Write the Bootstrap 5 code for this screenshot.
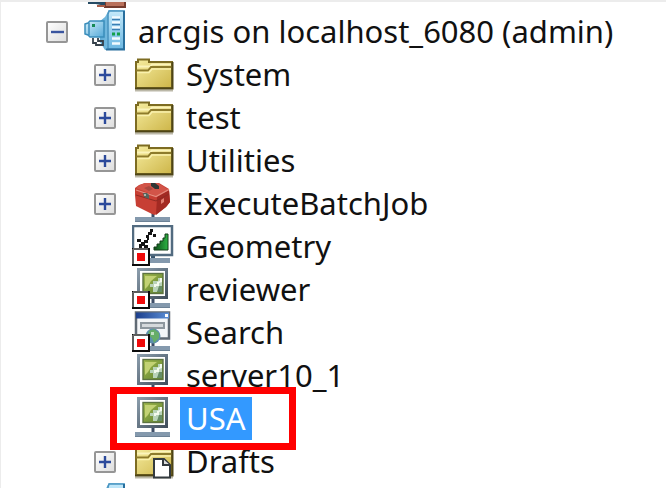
<!DOCTYPE html>
<html lang="en">
<head>
<meta charset="utf-8">
<meta name="viewport" content="width=device-width, initial-scale=1">
<title>arcgis on localhost_6080 (admin)</title>
<link href="https://cdn.jsdelivr.net/npm/bootstrap@5.3.0/dist/css/bootstrap.min.css" rel="stylesheet">
<style>
  body { font-family: "Noto Sans", "Open Sans", sans-serif; font-size: 31px; color: #111; background: #fff; }
  .catalog { border-top: 2px solid #ececec; border-left: 1px solid #ececec; }
  .tree-root { margin-top: -35px; padding-left: 45px; }
  .tree-branch { padding-left: 48px; }
  .tree-row { height: 43px; line-height: 43px; }
  .toggle-slot { width: 22px; height: 22px; margin-right: 16px; }
  .toggle-slot svg { width: 22px; height: 22px; }
  .tree-icon { width: 42px; height: 43px; margin-right: 6px; }
  .tree-label { padding: 0 6px; }
  .tree-label.selected { background: #3399ff; color: #fff; }
  .callout-frame { left: 16px; top: -10px; width: 186px; height: 63px; border: 7px solid #f00; z-index: 2; pointer-events: none; }
</style>
<script src="https://cdn.jsdelivr.net/npm/bootstrap@5.3.0/dist/js/bootstrap.bundle.min.js"></script>
</head>
<body>
<svg class="position-absolute" width="0" height="0" aria-hidden="true">
  <defs>
    <linearGradient id="gFolder" x1="0" y1="0" x2="1" y2="1"><stop offset="0" stop-color="#f6eda0"/><stop offset="1" stop-color="#cdb548"/></linearGradient>
    <linearGradient id="gBox" x1="0" y1="0" x2="1" y2="1"><stop offset="0" stop-color="#fff"/><stop offset="1" stop-color="#dcdcdc"/></linearGradient>
    <linearGradient id="gServer" x1="0" y1="0" x2="1" y2="0"><stop offset="0" stop-color="#5aa9d4"/><stop offset="1" stop-color="#a9dcf5"/></linearGradient>
    <linearGradient id="gPanel" x1="0" y1="0" x2="0" y2="1"><stop offset="0" stop-color="#c4e9fa"/><stop offset="1" stop-color="#6db8e2"/></linearGradient>
    <linearGradient id="gCube" x1="0" y1="0" x2="1" y2="1"><stop offset="0" stop-color="#d5f0fb"/><stop offset="1" stop-color="#54a9d8"/></linearGradient>
    <linearGradient id="gFrame" x1="0" y1="0" x2="1" y2="1"><stop offset="0" stop-color="#8a9cab"/><stop offset="1" stop-color="#42505e"/></linearGradient>
    <linearGradient id="gMap" x1="0" y1="0" x2="1" y2="1"><stop offset="0" stop-color="#a2b94a"/><stop offset="1" stop-color="#5f8332"/></linearGradient>
    <linearGradient id="gBar" x1="0" y1="0" x2="1" y2="0"><stop offset="0" stop-color="#1c3f8d"/><stop offset="1" stop-color="#5c8fd6"/></linearGradient>
    <linearGradient id="gGreen" x1="0" y1="0" x2="1" y2="0"><stop offset="0" stop-color="#0c4a16"/><stop offset="1" stop-color="#2eb344"/></linearGradient>

    <symbol id="minus" viewBox="0 0 22 22"><rect x="1" y="1" width="20" height="20" rx="1" fill="url(#gBox)" stroke="#969696" stroke-width="2"/><path d="M5 11h13" stroke="#3a559f" stroke-width="2.4"/></symbol>
    <symbol id="plus" viewBox="0 0 22 22"><rect x="1" y="1" width="20" height="20" rx="1" fill="url(#gBox)" stroke="#969696" stroke-width="2"/><path d="M5 11h12M11 5v12" stroke="#2c4a9b" stroke-width="2.4"/></symbol>

    <symbol id="base" viewBox="0 0 42 43"><path d="M21 30v6" stroke="#3c4c66" stroke-width="3"/><rect x="3" y="35" width="35" height="5" fill="#8499ad"/><path d="M3 39.500h35" stroke="#6c8195"/></symbol>
    <symbol id="stopped" viewBox="0 0 42 43"><rect x="1" y="24" width="16" height="16" fill="#fff" stroke="#0c0c0c" stroke-width="2"/><path d="M1 24h15M1 24v15" stroke="#777" stroke-width="1.500"/><rect x="5" y="28" width="8" height="8" fill="#f00a0a"/></symbol>

    <symbol id="folder" viewBox="0 0 42 43">
      <path d="M3 37.500h38" stroke="#bbb8a8" stroke-width="2"/>
      <path d="M4 35V9h2V6.500h11V9h23v26z" fill="url(#gFolder)" stroke="#7d6c22" stroke-width="2"/>
      <path d="M5 13.500h13l2-2h19" fill="none" stroke="#fbf4bb" stroke-width="2"/>
      <path d="M4 17.500h12l3-3.500h21" fill="none" stroke="#8d7b2b" stroke-width="1.800"/>
      <path d="M5 19.500h12l3-3.500h19" fill="none" stroke="#faf1ad" stroke-width="1.500"/>
      <path d="M3 35.500h37.500V9" fill="none" stroke="#4e4516" stroke-width="2"/>
    </symbol>
    <symbol id="drafts" viewBox="0 0 42 43">
      <use href="#folder"/>
      <path d="M22 19h10l6 6v12.500H22z" fill="#fff" stroke="#333a3f" stroke-width="2"/>
      <path d="M31 19v6h7" fill="#ddd" stroke="#333a3f" stroke-width="2"/>
    </symbol>
    <symbol id="server" viewBox="0 0 42 43">
      <path d="M15 12l6-5 4-7h16v40H21l-5-8z" fill="url(#gServer)"/>
      <path d="M25 1h15v38H24V4z" fill="url(#gPanel)" stroke="#4a94c0" stroke-width="1.600"/>
      <path d="M40 1v38.500H22" fill="none" stroke="#286f9e" stroke-width="2"/>
      <path d="M28 7.500h8M28 12.500h8M28 17.500h8M28 28.500h8M28 33.500h8" stroke="#f2fbff" stroke-width="2.500"/>
      <path d="M28 9.500h8M28 14.500h8M28 19.500h8" stroke="#397eb3" stroke-width="1.600"/>
      <path d="M28 24h3M33 24h3" stroke="#14a04b" stroke-width="3"/>
      <path d="M1 14l3-1 2-2h14v16H6l-2-2-3-1z" fill="url(#gCube)" stroke="#3a8dbb" stroke-width="1.500"/>
      <path d="M5 13v12" stroke="#3a8dbb" stroke-width="1.500"/><path d="M8 15.500h3" stroke="#168a55" stroke-width="3"/>
      <path d="M9 28v5h3v2h7v-4h-5v-3" fill="none" stroke="#35404a" stroke-width="1.800"/>
    </symbol>
    <symbol id="toolserver" viewBox="0 0 42 43">
      <path d="M21 33h20v7H21z" fill="#b9705a"/><path d="M21 34v6h20v-7" fill="none" stroke="#753b2d" stroke-width="2"/><path d="M4 35.500h8l5 1h4" fill="none" stroke="#264b64" stroke-width="3"/><path d="M13 39h8" stroke="#a85b45" stroke-width="2"/>
    </symbol>
    <symbol id="toolbox" viewBox="0 0 42 43">
      <use href="#base"/>
      <path d="M3 6l4-3 6-2h14l10 6 1 13-4 5-11 8-3-1-16-8-1-11z" fill="#c73f34"/>
      <path d="M4 6l4-3 5-2h13l11 7-13 6z" fill="#d25448"/>
      <path d="M25 15l12-7 1 12-4 5-10 8z" fill="#a32a23"/>
      <path d="M4 8l20 6.500 13-7" fill="none" stroke="#e58c7f" stroke-width="1.300"/>
      <path d="M4 13l20 6 13-7" fill="none" stroke="#8f2a23" stroke-width="1"/>
      <path d="M12 6l5-2 4 3-4 2z" fill="#a9483f"/>
      <path d="M19 1h4l4 3v3h-4l-4-3z" fill="#2f3735"/>
      <path d="M11 11h4l2 2v4l-5-2z" fill="#56645d"/><path d="M12 12h2v2h-2z" fill="#a8b5aa"/>
      <path d="M29 18l3-2v4l-3 2z" fill="#e07f72"/>
    </symbol>
    <symbol id="geometry" viewBox="0 0 42 43">
      <path d="M21 30v5" stroke="#36536b" stroke-width="4"/><rect x="16" y="33" width="22" height="5" fill="#8499ad"/>
      <rect x="1" y="1" width="39" height="29" fill="#fff" stroke="#526b80" stroke-width="2.500"/>
      <path d="M36 9v16H22v-3h3v-3h3v-3h3v-3h2V9z" fill="url(#gGreen)" stroke="#123c18" stroke-width="1"/>
      <path d="M18 4h3v3h-1v3h-4V7h2zM14 10h3v3h-3zM21 9h3v3h-3zM5 14h4v3H5zM9 17h3v-2h4v3h-3v2h3v3h-4v-2h-2v2H7v-4h2zM15 13h2v2h-2z" fill="#141414"/>
      <use href="#stopped"/>
    </symbol>
    <symbol id="mapserver" viewBox="0 0 42 43">
      <use href="#base"/>
      <rect x="6.500" y="1.500" width="28" height="28" fill="#fff" stroke="url(#gFrame)" stroke-width="3"/>
      <rect x="11" y="5.500" width="20" height="20" fill="url(#gMap)" stroke="#5d7340" stroke-width="1.400"/>
      <path d="M13 8h12l-6 5-3 5-3 3z" fill="#c3d274"/>
      <path d="M30 10h-4v3h-5v3h-3v3h3v5h4l5-6z" fill="#b9d3b9"/>
      <path d="M28 10v3l-3 1v2h-3v3h2v-1h3v-3l3-1v-4z" fill="#f3faee"/>
      <path d="M27 18h3v6h-5z" fill="#658c66"/>
    </symbol>
    <symbol id="reviewer" viewBox="0 0 42 43"><use href="#mapserver"/><use href="#stopped"/></symbol>
    <symbol id="search" viewBox="0 0 42 43">
      <use href="#base"/>
      <rect x="4" y="1.500" width="33" height="26" fill="#f4f6f8" stroke="#606a74" stroke-width="2.500"/>
      <rect x="4" y="1.500" width="33" height="6" fill="url(#gBar)"/><rect x="33" y="3" width="3" height="3" fill="#fff"/>
      <rect x="9" y="12" width="23" height="5" fill="#d5d9dc" stroke="#8e979e" stroke-width="2"/>
      <circle cx="21" cy="25" r="7.500" fill="#5d8fae"/><path d="M17 20l5-2 5 4v5l-5 5-2-5-4-3z" fill="#66ad68"/><path d="M19 21h3v3h-3z" fill="#c0dfc1"/>
      <use href="#stopped"/>
    </symbol>
  </defs>
</svg>

<main class="catalog vh-100 overflow-hidden">
  <ul class="tree-root list-unstyled mb-0 text-nowrap" aria-label="Servers">
    <li class="tree-row d-flex align-items-center"><span class="toggle-slot flex-shrink-0"></span><svg class="tree-icon flex-shrink-0" aria-hidden="true"><use href="#toolserver"/></svg></li>
    <li>
      <div class="tree-row d-flex align-items-center"><button type="button" class="toggle-slot btn p-0 border-0 d-flex flex-shrink-0" aria-label="Collapse arcgis" aria-expanded="true"><svg><use href="#minus"/></svg></button><svg class="tree-icon flex-shrink-0" aria-hidden="true"><use href="#server"/></svg><span class="tree-label">arcgis on localhost_6080 (admin)</span></div>
      <ul class="tree-branch list-unstyled">
        <li class="tree-row d-flex align-items-center"><button type="button" class="toggle-slot btn p-0 border-0 d-flex flex-shrink-0" aria-label="Expand System" aria-expanded="false"><svg><use href="#plus"/></svg></button><svg class="tree-icon flex-shrink-0" aria-hidden="true"><use href="#folder"/></svg><span class="tree-label">System</span></li>
        <li class="tree-row d-flex align-items-center"><button type="button" class="toggle-slot btn p-0 border-0 d-flex flex-shrink-0" aria-label="Expand test" aria-expanded="false"><svg><use href="#plus"/></svg></button><svg class="tree-icon flex-shrink-0" aria-hidden="true"><use href="#folder"/></svg><span class="tree-label">test</span></li>
        <li class="tree-row d-flex align-items-center"><button type="button" class="toggle-slot btn p-0 border-0 d-flex flex-shrink-0" aria-label="Expand Utilities" aria-expanded="false"><svg><use href="#plus"/></svg></button><svg class="tree-icon flex-shrink-0" aria-hidden="true"><use href="#folder"/></svg><span class="tree-label">Utilities</span></li>
        <li class="tree-row d-flex align-items-center"><button type="button" class="toggle-slot btn p-0 border-0 d-flex flex-shrink-0" aria-label="Expand ExecuteBatchJob" aria-expanded="false"><svg><use href="#plus"/></svg></button><svg class="tree-icon flex-shrink-0" aria-hidden="true"><use href="#toolbox"/></svg><span class="tree-label">ExecuteBatchJob</span></li>
        <li class="tree-row d-flex align-items-center"><span class="toggle-slot flex-shrink-0"></span><svg class="tree-icon flex-shrink-0" aria-hidden="true"><use href="#geometry"/></svg><span class="tree-label">Geometry</span></li>
        <li class="tree-row d-flex align-items-center"><span class="toggle-slot flex-shrink-0"></span><svg class="tree-icon flex-shrink-0" aria-hidden="true"><use href="#reviewer"/></svg><span class="tree-label">reviewer</span></li>
        <li class="tree-row d-flex align-items-center"><span class="toggle-slot flex-shrink-0"></span><svg class="tree-icon flex-shrink-0" aria-hidden="true"><use href="#search"/></svg><span class="tree-label">Search</span></li>
        <li class="tree-row d-flex align-items-center"><span class="toggle-slot flex-shrink-0"></span><svg class="tree-icon flex-shrink-0" aria-hidden="true"><use href="#mapserver"/></svg><span class="tree-label">server10_1</span></li>
        <li class="tree-row d-flex align-items-center position-relative"><span class="toggle-slot flex-shrink-0"></span><svg class="tree-icon flex-shrink-0" aria-hidden="true"><use href="#mapserver"/></svg><span class="tree-label selected">USA</span><span class="callout-frame position-absolute"></span></li>
        <li class="tree-row d-flex align-items-center"><button type="button" class="toggle-slot btn p-0 border-0 d-flex flex-shrink-0" aria-label="Expand Drafts" aria-expanded="false"><svg><use href="#plus"/></svg></button><svg class="tree-icon flex-shrink-0" aria-hidden="true"><use href="#drafts"/></svg><span class="tree-label">Drafts</span></li>
      </ul>
    </li>
    <li class="tree-row d-flex align-items-center"><span class="toggle-slot flex-shrink-0"></span><svg class="tree-icon flex-shrink-0" aria-hidden="true"><use href="#server"/></svg></li>
  </ul>
</main>
</body>
</html>
